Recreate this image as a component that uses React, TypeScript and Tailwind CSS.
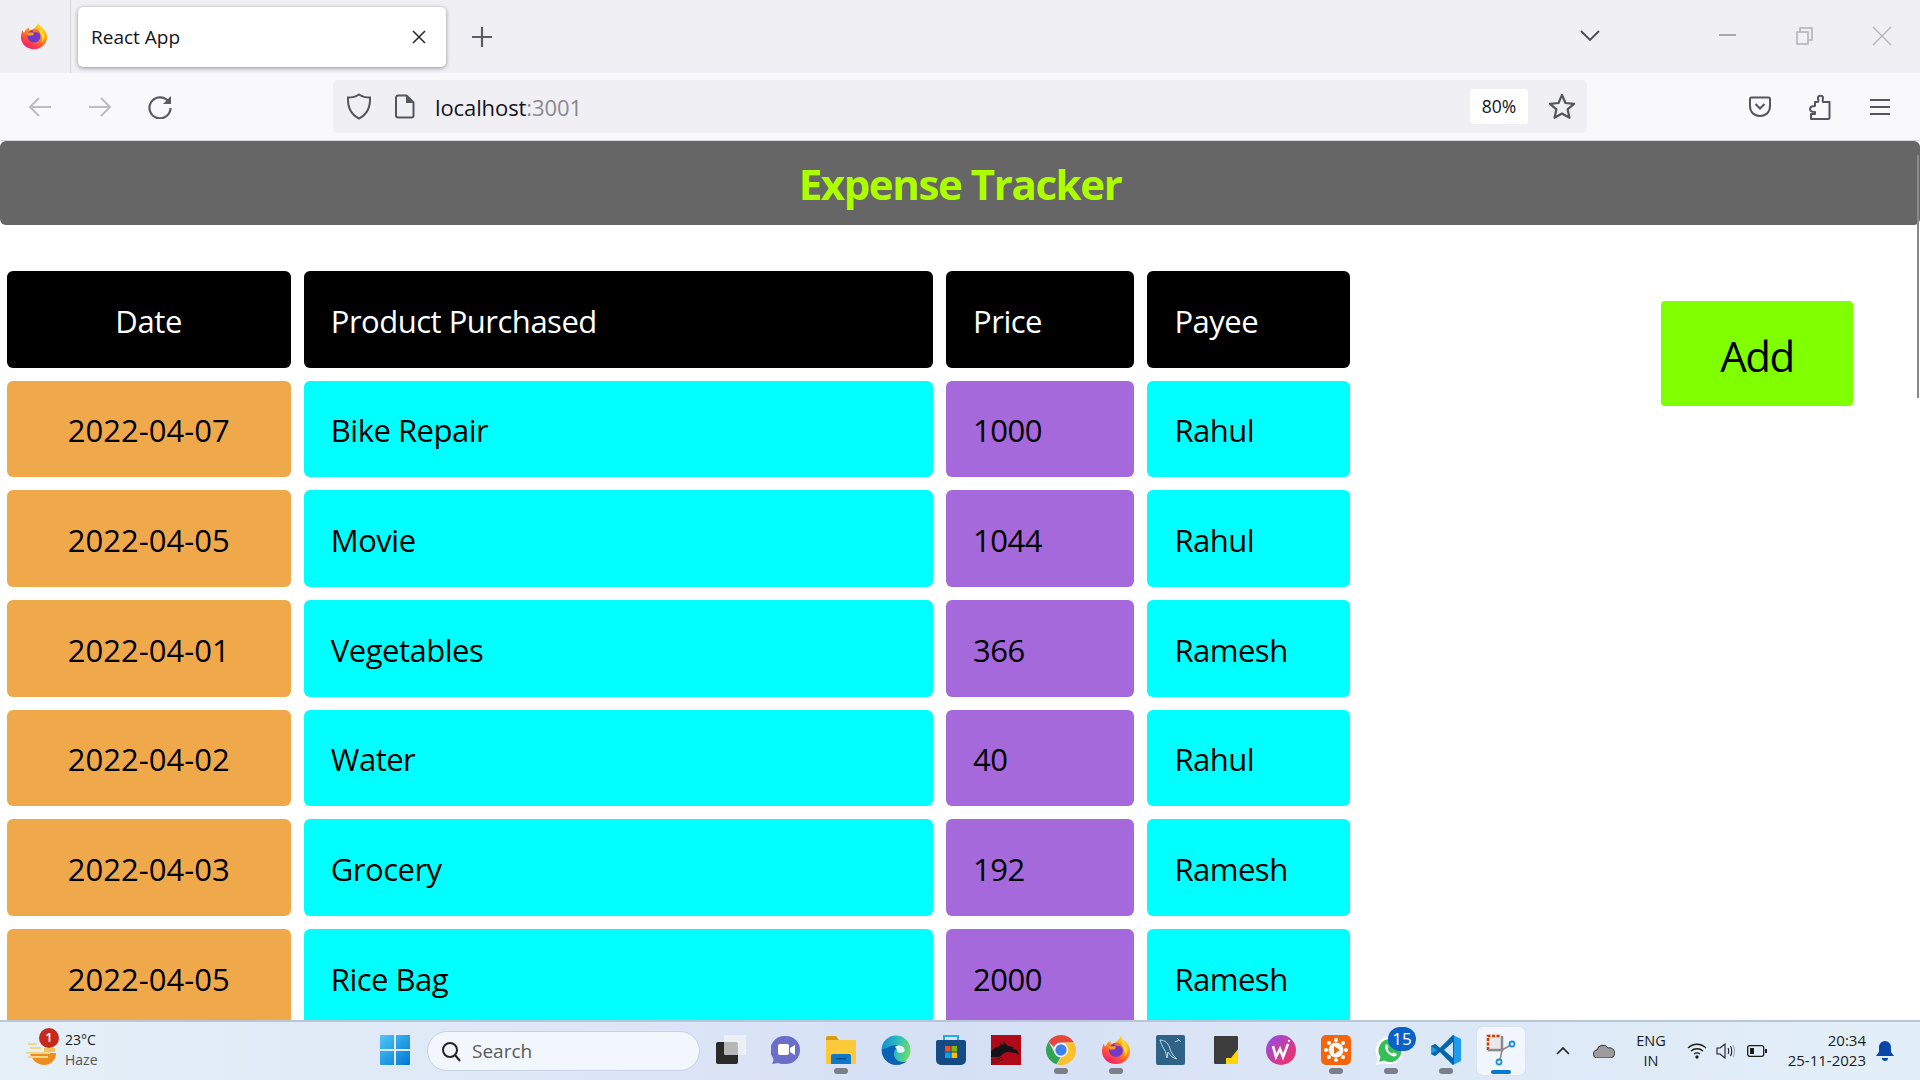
const rows = [
  ["2022-04-07", "Bike Repair", "1000", "Rahul"],
  ["2022-04-05", "Movie", "1044", "Rahul"],
  ["2022-04-01", "Vegetables", "366", "Ramesh"],
  ["2022-04-02", "Water", "40", "Rahul"],
  ["2022-04-03", "Grocery", "192", "Ramesh"],
  ["2022-04-05", "Rice Bag", "2000", "Ramesh"],
];

const cell = "flex items-center rounded-[6px] pt-[3px] text-[31px]";
const textCell = "pl-[27px] tracking-[-0.5px]";

function Firefox({ id, size }: { id: string; size: number }) {
  return (
    <svg width={size} height={size} viewBox="0 0 32 32">
      <defs>
        <linearGradient id={id} x1="0.8" y1="0" x2="0.2" y2="1">
          <stop offset="0" stopColor="#ffe226" />
          <stop offset="0.45" stopColor="#ff8a16" />
          <stop offset="0.8" stopColor="#ff3750" />
          <stop offset="1" stopColor="#e31587" />
        </linearGradient>
      </defs>
      <path d="M21 1c1 3 3 4 5 6 3 3 5 6 5 10 0 8-7 14-15 14S1 25 1 17c0-3 1-6 2-8 0 2 1 3 2 3 1-3 3-5 6-6-1 2-1 3 0 4 3-1 7-3 10-9z" fill={`url(#${id})`} />
      <path d="M21 3c2 3 6 6 7 11 1 4-1 7-3 9 1-4 0-8-3-11 0-3 0-6-1-9z" fill="#ffd52e" />
      <circle cx="16" cy="16" r="7.5" fill="#7139c9" />
      <path d="M8 12h7c1 0 1 2 0 3-2 1-4 0-5 1-1-1-2-2-2-4z" fill="#ff9a1f" />
      <path d="M14 9c4-1 9 1 9 7 0-3-3-5-6-4-1 0-3-2-3-3z" fill="#ff6d2a" />
    </svg>
  );
}

function Chrome() {
  return (
    <svg width="30" height="30" viewBox="0 0 30 30">
      <path d="M15 0a15 15 0 0 1 13 7.500H15a7.500 7.500 0 0 0-7 4.500L2.500 6.700A15 15 0 0 1 15 0z" fill="#e5483a" />
      <path d="M2.500 6.700 8.500 17.500a7.500 7.500 0 0 0 6 5L10.500 29.300A15 15 0 0 1 2.500 6.700z" fill="#34a353" />
      <path d="M28 7.500A15 15 0 0 1 11 29.500L17.500 19a7 7 0 0 0 1-11.500z" fill="#fbc02d" />
      <circle cx="15" cy="15" r="7" fill="#fff" />
      <circle cx="15" cy="15" r="5.700" fill="#3f80ee" />
    </svg>
  );
}

function Edge() {
  return (
    <svg width="30" height="30" viewBox="0 0 30 30">
      <defs>
        <linearGradient id="edgeA" x1="0" y1="0.3" x2="1" y2="0.5">
          <stop offset="0" stopColor="#0f8fd8" />
          <stop offset="0.6" stopColor="#35c4b4" />
          <stop offset="1" stopColor="#6fdc62" />
        </linearGradient>
      </defs>
      <circle cx="15" cy="15" r="14.500" fill="url(#edgeA)" />
      <path d="M1 15c0 8 6 15 14 15 5 0 9-2 11-4-4 2-9 1-11-2-2-2-3-6-1-9 1-2 4-3 7-2-4-4-11-3-15 0-2 1-4 0-5 2z" fill="#0b62b5" />
      <path d="M14 12c2-2 6-2 8 0 2 1 2 4 1 5-2 1-6 1-7 0 1-2-1-4-2-5z" fill="#e8f1fb" />
    </svg>
  );
}

function TaskIcon({ children, dot, active }: { children?: React.ReactNode; dot?: boolean; active?: boolean }) {
  return (
    <div className={`relative flex shrink-0 items-center justify-center pb-[3px] ${active ? "mx-[3.500px] h-[48px] w-[48px] rounded-[5px] bg-[#f1f6fc] shadow-[0_0_1px_rgba(0,0,0,0.2)]" : "h-full w-[55px]"}`}>
      {children}
      {dot && <span className="absolute bottom-[6px] left-[21px] h-[6px] w-[14px] rounded-full bg-[#7a7f8a]" />}
      {active && <span className="absolute bottom-[1px] left-[14px] h-[4px] w-[20px] rounded-full bg-[#0078d4]" />}
    </div>
  );
}

function BrowserChrome() {
  return (
    <>
      <div className="flex h-[73px] shrink-0 items-center bg-[#f0f0f4]">
        <div className="flex h-full w-[71px] shrink-0 items-center justify-center border-r border-[#d4d4d9] pb-[1px] pr-[2px]">
          <Firefox id="ffTop" size={28} />
        </div>
        <div className="ml-[7px] flex h-[60px] w-[368px] items-center justify-between rounded-[5px] bg-white pl-[13px] pr-[19px] shadow-[0_1px_4px_rgba(0,0,0,0.4)]">
          <span className="pt-[2px] text-[19px] text-[#15141a]">React App</span>
          <svg width="16" height="16" viewBox="0 0 16 16" stroke="#2b2a33" strokeWidth="1.600" fill="none">
            <path d="M2 2l12 12M14 2L2 14" />
          </svg>
        </div>
        <svg className="ml-[25px]" width="22" height="22" viewBox="0 0 22 22" stroke="#5b5b66" strokeWidth="2.200" fill="none">
          <path d="M11 1v20M1 11h20" />
        </svg>
        <svg className="mb-[2px] ml-[1087px]" width="20" height="12" viewBox="0 0 20 12" stroke="#4a4a55" strokeWidth="1.800" fill="none">
          <path d="M1 1l9 9 9-9" />
        </svg>
        <div className="mb-[4px] ml-[119px] h-[2px] w-[17px] bg-[#a8a8b0]" />
        <svg className="mb-[2px] ml-[60px]" width="17" height="19" viewBox="0 0 17 19" stroke="#b0b0b6" strokeWidth="1.500" fill="none">
          <path d="M1 6h11v12H1zM4 6V2h12v12h-4" />
        </svg>
        <svg className="mb-[2px] ml-[59px]" width="20" height="20" viewBox="0 0 20 20" stroke="#b4b4ba" strokeWidth="1.400" fill="none">
          <path d="M1 1l18 18M19 1L1 19" />
        </svg>
      </div>
      <div className="flex h-[68px] shrink-0 items-center border-b border-[#d8d8dc] bg-[#f9f9fb]">
        <svg className="ml-[28px]" width="24" height="22" viewBox="0 0 24 22" stroke="#bdbdc2" strokeWidth="2" fill="none">
          <path d="M23 11H2M11 2l-9 9 9 9" />
        </svg>
        <svg className="ml-[36px]" width="24" height="22" viewBox="0 0 24 22" stroke="#bdbdc2" strokeWidth="2" fill="none">
          <path d="M1 11h21M13 2l9 9-9 9" />
        </svg>
        <svg className="ml-[36px]" width="24" height="24" viewBox="0 0 24 24" fill="none">
          <path d="M20 6a10.500 10.500 0 1 0 2.500 7" stroke="#5b5b66" strokeWidth="2.200" />
          <path d="M23 1v8h-8z" fill="#5b5b66" />
        </svg>
        <div className="ml-[161px] flex h-[53px] w-[1254px] items-center rounded-[5px] bg-[#f0f0f4]">
          <svg className="ml-[13px]" width="26" height="27" viewBox="0 0 26 27" stroke="#55555f" strokeWidth="2" fill="none">
            <path d="M13 1.500c3 2 7 3 11 3 .5 10-3 17-11 21C5 21.500 1.500 14.500 2 4.500c4 0 8-1 11-3z" />
          </svg>
          <svg className="ml-[22px]" width="21" height="25" viewBox="0 0 21 25" fill="none">
            <path d="M2 3.500a2 2 0 0 1 2-2h8.500l7 7v13a2 2 0 0 1-2 2H4a2 2 0 0 1-2-2z" stroke="#55555f" strokeWidth="2" />
            <path d="M12 1.500l7.500 7.500H12z" fill="#55555f" />
          </svg>
          <span className="ml-[20px] pt-[2px] text-[22px] tracking-[-0.1px] text-[#15141a]">
            localhost<span className="text-[#8a8a90]">:3001</span>
          </span>
          <div className="ml-auto flex h-[35px] w-[58px] items-center justify-center rounded-[4px] bg-white text-[17.500px] text-[#15141a]">80%</div>
          <svg className="ml-[20px] mr-[11px]" width="28" height="27" viewBox="0 0 28 27" stroke="#55555f" strokeWidth="2.200" strokeLinejoin="round" fill="none">
            <path d="M14 2l3.500 8 8.500.8-6.400 5.600 1.900 8.400L14 20.500l-7.500 4.300 1.900-8.400L2 10.800l8.500-.8z" />
          </svg>
        </div>
        <svg className="ml-[161px]" width="24" height="24" viewBox="0 0 24 24" stroke="#55555f" strokeWidth="2" fill="none">
          <path d="M2 4a1.500 1.500 0 0 1 1.500-1.500h17A1.500 1.500 0 0 1 22 4v7c0 6-4 10-10 10S2 17 2 11z" />
          <path d="M7.500 9l4.500 4.500L16.500 9" />
        </svg>
        <svg className="ml-[36px]" width="24" height="28" viewBox="0 0 24 28" stroke="#55555f" strokeWidth="2" strokeLinejoin="round" fill="none">
          <path d="M3 26h17a1.500 1.500 0 0 0 1.500-1.500V9H15c-1-1.500 0-2.500 0-4 0-3-5-3-5 0 0 1.500 1 2.500 0 4H7v4c-3 0-5 1-5 3s2 3 5 3v2H3z" />
        </svg>
        <svg className="ml-[37px]" width="22" height="18" viewBox="0 0 22 18" stroke="#55555f" strokeWidth="2.200" fill="none">
          <path d="M1 2h20M1 9h20M1 16h20" />
        </svg>
      </div>
    </>
  );
}

function Taskbar() {
  return (
    <div className="flex h-[60px] shrink-0 items-center border-t-[2px] border-[#b9c5d8] bg-gradient-to-r from-[#e6f0f8] via-[#d6e0f5] to-[#e3eff8] text-[#1c1c1c]">
      <div className="relative flex w-[367px] shrink-0 items-center pl-[24px]">
        <svg width="32" height="32" viewBox="0 0 32 32">
          <path d="M6 18h26c0 8-6 12-12 12S7 25 6 18z" fill="#f08c1c" />
          <path d="M4 8h9v2H4zM6 12h11v2H6zM2 17h24v2H2zM4 21h20v2H4z" fill="#f3d68c" />
          <path d="M20 13h11v4H20z" fill="#f4c35c" />
        </svg>
        <span className="absolute left-[39px] top-[-2px] flex h-[20px] w-[20px] items-center justify-center rounded-full bg-[#c42b1c] text-[13px] font-semibold text-white">1</span>
        <div className="mb-[2px] ml-[9px] flex flex-col text-[14px] leading-[20px]">
          <span>23°C</span>
          <span className="text-[#555]">Haze</span>
        </div>
      </div>
      <TaskIcon>
        <svg width="30" height="30" viewBox="0 0 30 30">
          <defs>
            <linearGradient id="winA" x1="0" y1="0" x2="1" y2="1">
              <stop offset="0" stopColor="#4fc6f7" />
              <stop offset="1" stopColor="#0078d4" />
            </linearGradient>
          </defs>
          <path d="M0 1a1 1 0 0 1 1-1h13v14H0zM16 0h13a1 1 0 0 1 1 1v13H16zM0 16h14v14H1a1 1 0 0 1-1-1zM16 16h14v13a1 1 0 0 1-1 1H16z" fill="url(#winA)" />
        </svg>
      </TaskIcon>
      <div className="ml-[5px] mr-[3px] flex h-[40px] w-[273px] shrink-0 items-center rounded-full border border-[#c8d2e4] bg-[#f2f6fd] pl-[13px] text-[19px] text-[#5a5a5a]">
        <svg width="20" height="21" viewBox="0 0 20 21" stroke="#222" strokeWidth="2" fill="none">
          <circle cx="9" cy="9" r="7" />
          <path d="M14 14l5 6" />
        </svg>
        <span className="ml-[11px]">Search</span>
      </div>
      <TaskIcon>
        <svg width="30" height="30" viewBox="0 0 30 30">
          <rect x="0" y="7" width="22" height="22" rx="2" fill="#2a2a2a" />
          <rect x="8" y="0" width="22" height="20" rx="1" fill="#f4f4f4" fillOpacity="0.7" />
        </svg>
      </TaskIcon>
      <TaskIcon>
        <svg width="30" height="30" viewBox="0 0 30 30">
          <path d="M15 1a14 14 0 0 1 0 28c-3 0-6 0-8-1l-6 1c1-2 2-4 1-6A14 14 0 0 1 15 1z" fill="#6c6fc9" />
          <rect x="7" y="9" width="11" height="11" rx="2" fill="#fff" />
          <path d="M19 13l5-3v10l-5-3z" fill="#fff" />
        </svg>
      </TaskIcon>
      <TaskIcon dot>
        <svg width="30" height="28" viewBox="0 0 30 28">
          <path d="M0 2a2 2 0 0 1 2-2h8l3 4H0z" fill="#d99e06" />
          <rect x="0" y="4" width="30" height="24" rx="1" fill="#fcc93a" />
          <path d="M5 20a2 2 0 0 1 2-2h16a2 2 0 0 1 2 2v8H5z" fill="#0f78c8" />
          <rect x="10" y="22" width="10" height="1.500" fill="#084a85" />
        </svg>
      </TaskIcon>
      <TaskIcon>
        <Edge />
      </TaskIcon>
      <TaskIcon>
        <svg width="30" height="30" viewBox="0 0 30 30">
          <path d="M8 6V1h14v5" stroke="#2aa8e0" strokeWidth="2" fill="none" />
          <path d="M2 5h26a2 2 0 0 1 2 2v18a5 5 0 0 1-5 5H5a5 5 0 0 1-5-5V7a2 2 0 0 1 2-2z" fill="#154b85" />
          <rect x="9" y="11" width="5.500" height="5.500" fill="#f25022" />
          <rect x="15.500" y="11" width="5.500" height="5.500" fill="#7fba00" />
          <rect x="9" y="17.500" width="5.500" height="5.500" fill="#00a4ef" />
          <rect x="15.500" y="17.500" width="5.500" height="5.500" fill="#ffb900" />
        </svg>
      </TaskIcon>
      <TaskIcon>
        <svg width="30" height="30" viewBox="0 0 30 30">
          <rect width="30" height="30" fill="#b00a18" />
          <path d="M0 22h8c3-2 6-5 8-5l9 1 3 2-2-5-4-1 1-2-6-1-3-3-2-3 1 5-5-2 2 3-5 1-5 4z" fill="#15121a" />
          <path d="M0 25c4 0 9-2 11-3M0 28c4 0 9-2 12-4" stroke="#5a0a12" fill="none" />
        </svg>
      </TaskIcon>
      <TaskIcon dot>
        <Chrome />
      </TaskIcon>
      <TaskIcon dot>
        <Firefox id="ffBar" size={30} />
      </TaskIcon>
      <TaskIcon>
        <svg width="30" height="30" viewBox="0 0 30 30">
          <rect width="29" height="30" rx="2" fill="#2e6287" />
          <path d="M4 5c5 0 9 4 10 9 1 3 3 7 7 10-4-1-7-3-9-7-1 1 0 5-1 6-1-3-1-6-3-9C6 11 5 8 4 5zM21 3l4 4M19 7l4-2" stroke="#c3d6e2" strokeWidth="1" fill="none" />
        </svg>
      </TaskIcon>
      <TaskIcon>
        <svg width="24" height="28" viewBox="0 0 24 28">
          <path d="M1 0h22a1 1 0 0 1 1 1v15L13 28H1a1 1 0 0 1-1-1V1a1 1 0 0 1 1-1z" fill="#3c3c3c" />
          <path d="M24 13v14a1 1 0 0 1-1 1H12V22h5z" fill="#ffd400" />
        </svg>
      </TaskIcon>
      <TaskIcon>
        <svg width="30" height="30" viewBox="0 0 30 30">
          <defs>
            <linearGradient id="wpsA" x1="0" y1="0" x2="1" y2="1">
              <stop offset="0" stopColor="#8c4df0" />
              <stop offset="1" stopColor="#ff2d55" />
            </linearGradient>
          </defs>
          <circle cx="15" cy="15" r="15" fill="url(#wpsA)" />
          <path d="M7 11l3 11 4-8 3 8 5-13" stroke="#fff" strokeWidth="2.600" fill="none" />
          <circle cx="23" cy="6" r="1.200" fill="#fff" />
        </svg>
      </TaskIcon>
      <TaskIcon dot>
        <svg width="30" height="30" viewBox="0 0 30 30">
          <rect width="30" height="30" rx="5" fill="#f4660d" />
          <circle cx="15" cy="15" r="7.500" fill="#fff" />
          <path d="M13 11l6 4-6 4z" fill="#f4660d" />
          <g fill="#fff">
            <circle cx="15" cy="5" r="2" />
            <circle cx="15" cy="25" r="2" />
            <circle cx="5" cy="15" r="2" />
            <circle cx="25" cy="15" r="2" />
            <circle cx="8" cy="8" r="2" />
            <circle cx="22" cy="8" r="2" />
            <circle cx="8" cy="22" r="2" />
            <circle cx="22" cy="22" r="2" />
          </g>
        </svg>
      </TaskIcon>
      <TaskIcon dot>
        <svg width="30" height="30" viewBox="0 0 30 30" className="mr-[2px] mt-[2px]">
          <path d="M15 1a13.500 13.500 0 0 1 0 27c-2 0-4 0-6-1l-8 2 2-7A13.500 13.500 0 0 1 15 1z" fill="#fff" />
          <path d="M15 3a11.500 11.500 0 0 1 0 23c-2 0-4-.5-6-1.500l-5 1.500 1.500-5A11.500 11.500 0 0 1 15 3z" fill="#36bf57" />
          <path d="M10 9c1-1 2-1 2.500 0l1 2.500-1 1.500c1 2 2.500 3.500 4.500 4.500l1.500-1 2.500 1c1 .5 1 1.500 0 2.500-3 2.500-13-5-10.500-11z" fill="#fff" />
        </svg>
        <span className="absolute left-[25px] top-[5px] flex h-[24px] w-[28px] items-center justify-center rounded-full bg-[#0a63c4] text-[17px] text-white">15</span>
      </TaskIcon>
      <TaskIcon dot>
        <svg width="30" height="30" viewBox="0 0 30 30">
          <path d="M22 0l8 4v22l-8 4L9 17l-5 4-4-2V11l4-2 5 4z" fill="#1f9cf0" />
          <path d="M22 0L9 13l-5-4-4 2 6 4-6 4 4 2 5-4 13 13 1-1V1z" fill="#0065a9" />
          <path d="M22 7l-9 8 9 8z" fill="#d3e7f6" />
        </svg>
      </TaskIcon>
      <TaskIcon active>
        <svg width="30" height="32" viewBox="0 0 30 32" fill="none">
          <rect x="0" y="0" width="16" height="18" fill="#e8e8ea" />
          <path d="M2 16V2h12" stroke="#d83b01" strokeWidth="2.500" strokeDasharray="3 1.500" />
          <path d="M16 2v14H2" stroke="#8a8a8a" strokeWidth="2.500" />
          <path d="M16 16l9-5M16 16l-2 10" stroke="#888" strokeWidth="1.500" />
          <circle cx="26" cy="10" r="2.500" stroke="#1a8fe3" strokeWidth="1.800" />
          <circle cx="13" cy="28" r="2.500" stroke="#1a8fe3" strokeWidth="1.800" />
        </svg>
      </TaskIcon>
      <svg className="ml-[28px]" width="14" height="8" viewBox="0 0 14 8" stroke="#1c1c1c" strokeWidth="1.600" fill="none">
        <path d="M1 7l6-6 6 6" />
      </svg>
      <svg className="ml-[23px]" width="22" height="14" viewBox="0 0 22 14">
        <path d="M5 14a4 4 0 0 1-1-8 6 6 0 0 1 11-2 5 5 0 0 1 3 10z" fill="#9c9c9c" stroke="#333" strokeWidth="1" />
      </svg>
      <div className="ml-[16px] flex w-[40px] flex-col items-center text-[14.500px] leading-[20px]">
        <span>ENG</span>
        <span>IN</span>
      </div>
      <svg className="ml-[16px]" width="20" height="16" viewBox="0 0 20 16" stroke="#1c1c1c" strokeWidth="1.300" fill="none">
        <path d="M1 5c5-5 13-5 18 0M4 8c3.500-3 8.500-3 12 0M7 11c2-1.500 4-1.500 6 0" />
        <circle cx="10" cy="14" r="1" fill="#1c1c1c" />
      </svg>
      <svg className="ml-[9px]" width="20" height="16" viewBox="0 0 20 16" stroke="#1c1c1c" strokeWidth="1.100" fill="none">
        <path d="M1 5h3l5-4v14l-5-4H1zM12 5c1 2 1 4 0 6M14.500 3c1.500 3 1.500 7 0 10" />
        <path d="M17 2c2 4 2 8 0 12" stroke="#aaa" />
      </svg>
      <svg className="ml-[11px]" width="20" height="12" viewBox="0 0 20 12" fill="none">
        <rect x="0.700" y="0.700" width="16" height="10.600" rx="2" stroke="#1c1c1c" strokeWidth="1.300" />
        <rect x="3" y="3" width="4" height="6" fill="#1c1c1c" />
        <rect x="18" y="4" width="2" height="4" fill="#1c1c1c" />
      </svg>
      <div className="mb-[2px] ml-[11px] flex w-[88px] flex-col items-end text-[15px] leading-[20px]">
        <span>20:34</span>
        <span className="whitespace-nowrap">25-11-2023</span>
      </div>
      <svg className="ml-[10px]" width="18" height="20" viewBox="0 0 18 20" fill="#0a46a8">
        <path d="M9 0a6 6 0 0 1 6 6v5l3 4H0l3-4V6a6 6 0 0 1 6-6z" />
        <path d="M6 17h6a3 3 0 0 1-6 0z" />
      </svg>
    </div>
  );
}

export default function App() {
  return (
    <div className="flex h-screen flex-col overflow-hidden bg-white font-['Open_Sans','Noto_Sans',sans-serif]">
      <BrowserChrome />
      <div className="relative min-h-0 flex-1 overflow-hidden">
        <div className="flex h-[84px] items-center justify-center rounded-[6px] bg-[#666666] text-[42px] font-bold tracking-[-1.400px] text-[#adff00]">
          Expense Tracker
        </div>
        <div className="mt-[46px] flex items-start pl-[7px]">
          <div className="grid grid-cols-[283.500px_629px_188px_202.500px] auto-rows-[96.600px] gap-x-[13.300px] gap-y-[13.100px]">
            <div className={`${cell} justify-center bg-black tracking-[-0.3px] text-white`}>Date</div>
            <div className={`${cell} ${textCell} bg-black text-white`}>Product Purchased</div>
            <div className={`${cell} ${textCell} bg-black text-white`}>Price</div>
            <div className={`${cell} ${textCell} bg-black text-white`}>Payee</div>
            {rows.map((r, i) => (
              <div key={i} className="contents">
                <div className={`${cell} justify-center bg-[#efa94a] text-black`}>{r[0]}</div>
                <div className={`${cell} ${textCell} bg-[#00ffff] text-black`}>{r[1]}</div>
                <div className={`${cell} ${textCell} bg-[#a569dc] text-black`}>{r[2]}</div>
                <div className={`${cell} ${textCell} bg-[#00ffff] text-black`}>{r[3]}</div>
              </div>
            ))}
          </div>
          <div className="ml-[311px] mt-[30px] flex h-[105px] w-[192px] items-center justify-center rounded-[4px] bg-[#7fff00] pt-[3px] text-[42px] tracking-[-1.500px] text-black">
            Add
          </div>
        </div>
        <div className="absolute right-[1px] top-[14px] h-[243px] w-[2px] bg-[#8a8a8a]" />
      </div>
      <Taskbar />
    </div>
  );
}
